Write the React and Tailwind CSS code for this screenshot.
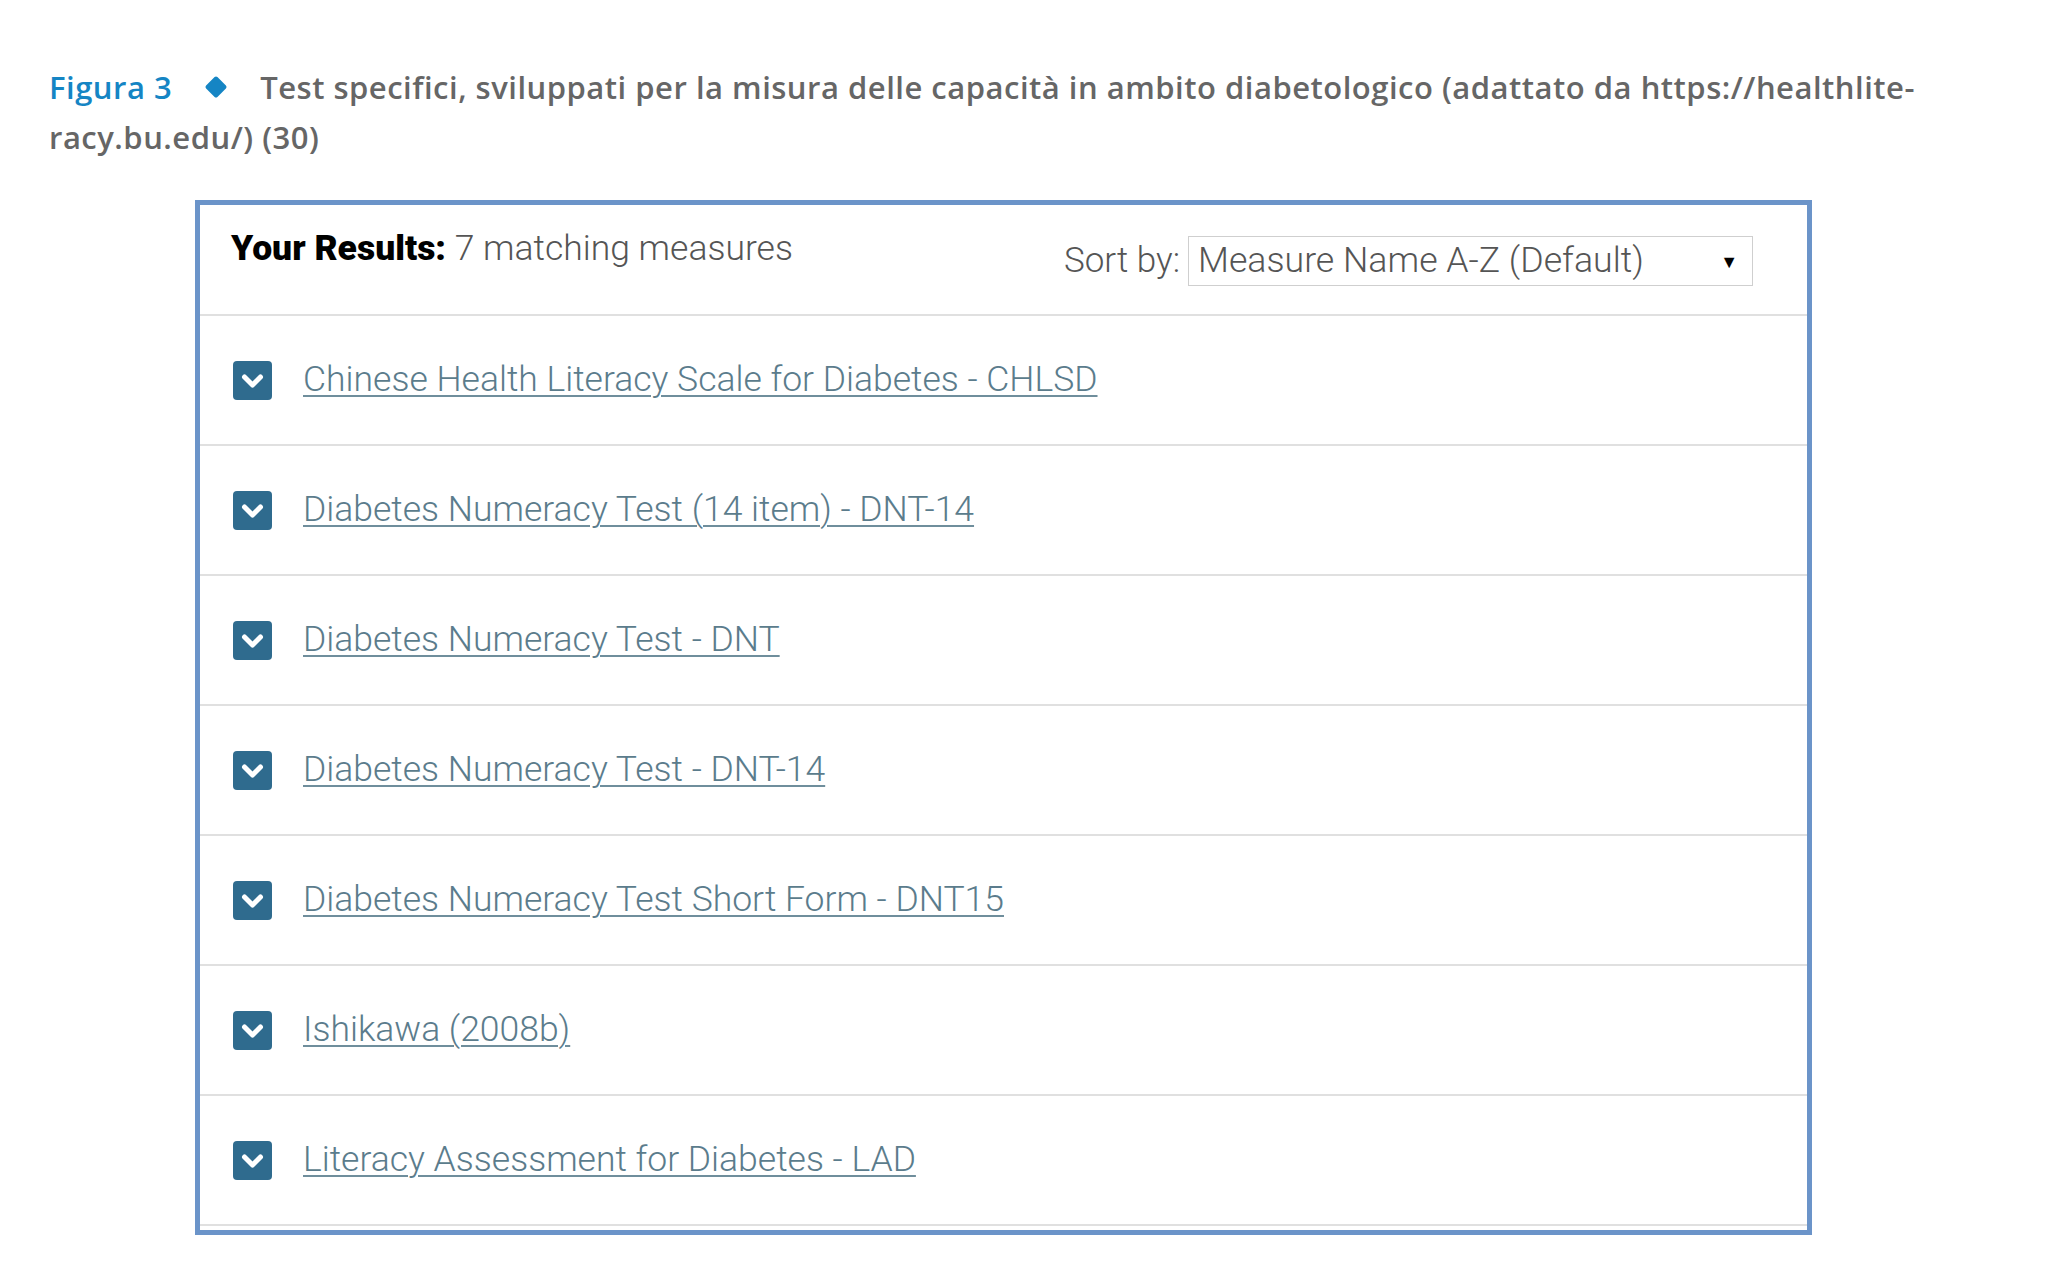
import React from "react";

const items = [
  "Chinese Health Literacy Scale for Diabetes - CHLSD",
  "Diabetes Numeracy Test (14 item) - DNT-14",
  "Diabetes Numeracy Test - DNT",
  "Diabetes Numeracy Test - DNT-14",
  "Diabetes Numeracy Test Short Form - DNT15",
  "Ishikawa (2008b)",
  "Literacy Assessment for Diabetes - LAD",
];

function Chevron() {
  return (
    <svg width="39" height="39" viewBox="0 0 39 39" className="shrink-0">
      <rect x="0" y="0" width="39" height="39" rx="4" fill="#2f6b8e" />
      <path
        d="M11.5 16 L19.5 24 L27.5 16"
        fill="none"
        stroke="#ffffff"
        strokeWidth="5"
        strokeLinecap="round"
        strokeLinejoin="round"
      />
    </svg>
  );
}

export default function App() {
  return (
    <div className="w-[2066px] h-[1284px] bg-white overflow-hidden">
      <div className="pt-[62px] pl-[49px] font-['Open_Sans',sans-serif] text-[31px] leading-[50px] font-semibold text-[#666666] tracking-[0.5px]">
        <div className="flex items-center whitespace-nowrap">
          <span className="text-[#1585c4]">Figura 3</span>
          <span className="ml-[36px] mr-[36px] inline-block w-[16px] h-[16px] bg-[#1585c4] rotate-45 rounded-[2px]"></span>
          <span>
            Test specifici, sviluppati per la misura delle capacità in ambito diabetologico (adattato da https://healthlite-
          </span>
        </div>
        <div>racy.bu.edu/) (30)</div>
      </div>

      <div className="mt-[38px] ml-[195px] w-[1617px] h-[1035px] border-[5px] border-[#6b94c9] flex flex-col font-['Roboto',sans-serif]">
        <div className="h-[111px] shrink-0 border-b-2 border-[#e0e0e0] flex justify-between pl-[31px] pr-[54px]">
          <div className="pt-[22px] text-[35.5px] leading-[42px] text-[#555] font-light whitespace-nowrap">
            <span className="font-black text-black tracking-[0px]">Your Results:</span> 7 matching measures
          </div>
          <div className="pt-[31px] flex items-start">
            <span className="text-[35px] leading-[50px] font-light text-[#555] mr-[8px] whitespace-nowrap">Sort by:</span>
            <div className="w-[565px] h-[50px] border border-[#cfcfcf] flex items-center justify-between pl-[9px] pr-[14px]">
              <span className="text-[35.7px] font-light text-[#555] whitespace-nowrap">Measure Name A-Z (Default)</span>
              <span className="text-[18px] text-black">▼</span>
            </div>
          </div>
        </div>
        {items.map((t, i) => (
          <div
            key={i}
            className="h-[130px] shrink-0 border-b-2 border-[#e0e0e0] flex items-center pl-[33px]"
          >
            <Chevron />
            <span className="ml-[31px] text-[35.5px] font-light text-[#5b7c8c] underline decoration-2 underline-offset-[4px] decoration-[#6f8e9c] whitespace-nowrap">
              {t}
            </span>
          </div>
        ))}
      </div>
    </div>
  );
}
